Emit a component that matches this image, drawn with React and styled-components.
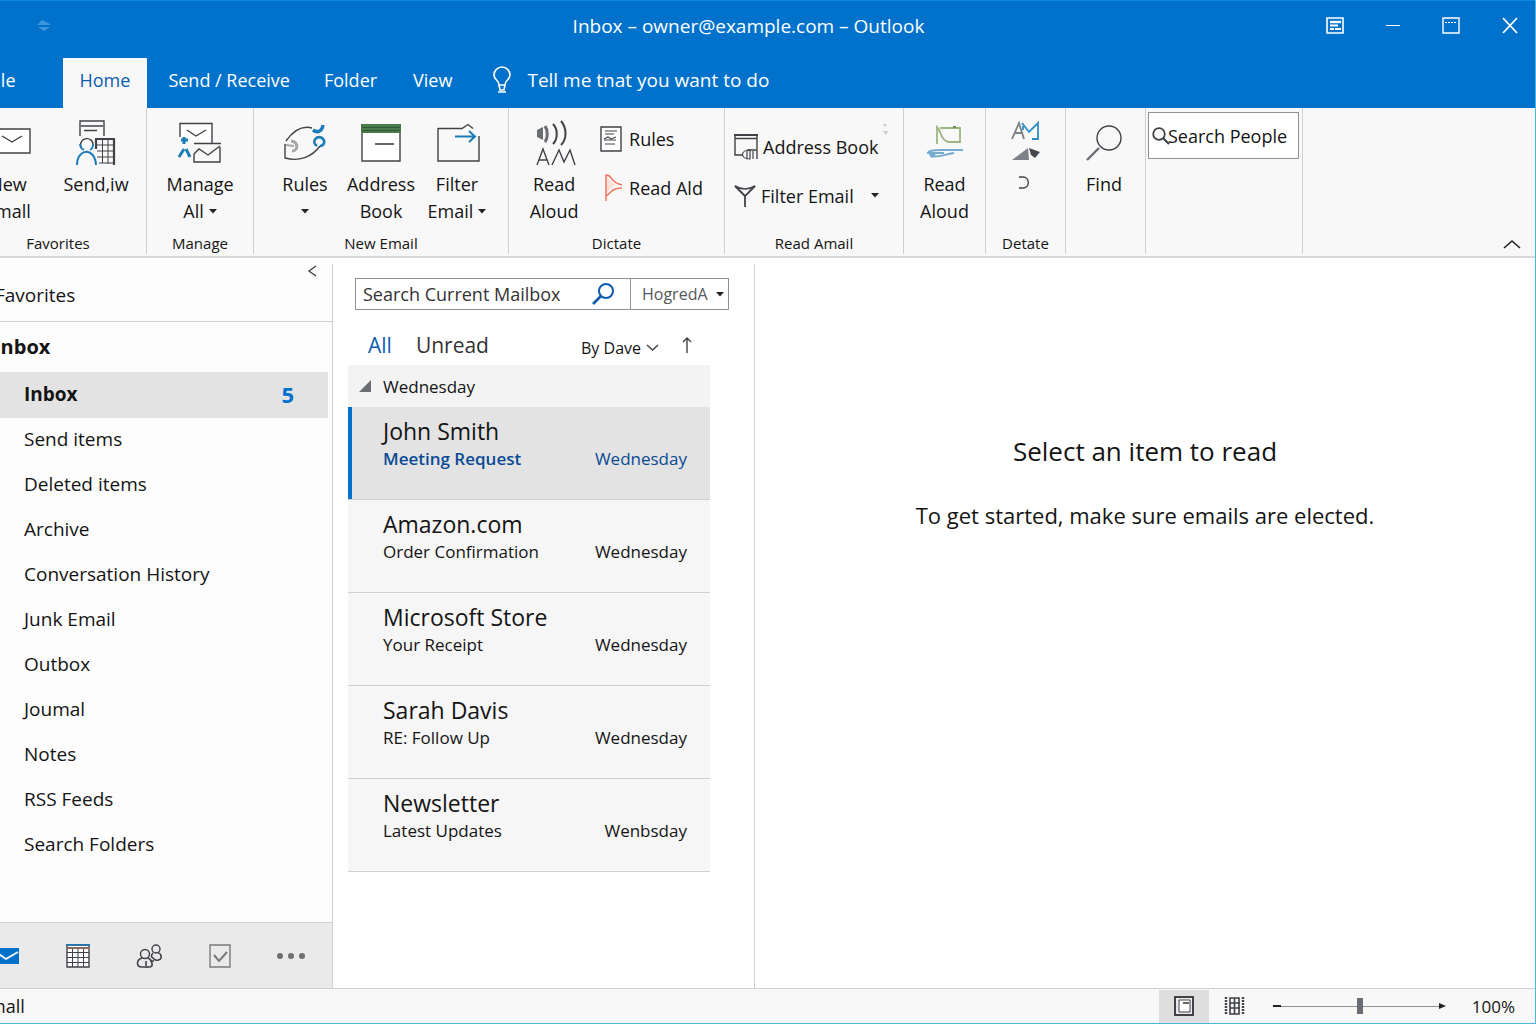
import React, { useState } from "react";
import styled, { createGlobalStyle } from "styled-components";

const primaryColor = "#0072cc";
const linkColor = "#0b5cad";
const lineColor = "#d0d0d0";
const panelColor = "#f8f8f8";
const inkColor = "#3f4247";
const fontStack = `"Open Sans", "Noto Sans", sans-serif`;

const GlobalStyle = createGlobalStyle`
  * {
    box-sizing: border-box;
  }
  body {
    margin: 0;
    overflow: hidden;
    background: #fff;
    color: #141414;
    font-family: ${fontStack};
    font-size: 18px;
  }
  button, input, select {
    font-family: inherit;
    color: inherit;
    margin: 0;
  }
  button {
    background: none;
    border: none;
    padding: 0;
    cursor: pointer;
  }
  svg {
    display: block;
    flex: none;
    overflow: visible;
  }
`;

// the window hangs a little over the left edge of the screen
const Window = styled.div`
  display: flex;
  flex-direction: column;
  min-height: 100vh;
  margin-left: -30px;
  border-right: 1px solid #4db4dc;
  border-bottom: 1px solid #4db4dc;
`;

const TitleBar = styled.header`
  display: grid;
  grid-template-columns: 1fr auto 1fr;
  align-items: center;
  height: 58px;
  padding: 0 17px 8px 9px;
  background: ${primaryColor};
  border-top: 1px solid #0a8be0;
  color: #fff;
`;

const QuickAccess = styled.div`
  padding-left: 58px;
`;

const Title = styled.h1`
  margin: 0;
  font-size: 19px;
  font-weight: 400;
  line-height: 24px;
`;

const WindowButtons = styled.div`
  display: flex;
  justify-content: flex-end;
  gap: 42px;
`;

const TabBar = styled.nav`
  display: flex;
  height: 50px;
  background: ${primaryColor};
  color: #fff;
`;

const Tab = styled.button`
  padding: 0 17px 6px;
  margin-right: ${(props) => props.$gap || 0}px;
  font-size: 18px;
  line-height: 44px;
  background: ${(props) => (props.$active ? panelColor : "transparent")};
  color: ${(props) => (props.$active ? linkColor : "#fff")};
`;

const TellMe = styled.button`
  display: flex;
  align-items: center;
  gap: 16px;
  margin-left: 24px;
  padding-bottom: 6px;
  font-size: 19px;
  color: #fff;
`;

const Ribbon = styled.section`
  display: flex;
  height: 150px;
  background: ${panelColor};
  border-bottom: 2px solid #d9d9d9;
`;

const Group = styled.div`
  display: flex;
  flex-direction: column;
  flex: none;
  width: ${(props) => props.$width}px;
  margin-bottom: 2px;
  border-right: 1px solid ${lineColor};
`;

const GroupBody = styled.div`
  display: flex;
  flex: 1;
  justify-content: center;
  gap: ${(props) => props.$gap || 0}px;
  padding-right: ${(props) => props.$inset || 0}px;
`;

const GroupLabel = styled.div`
  height: 22px;
  font-size: 15px;
  line-height: 22px;
  text-align: center;
`;

const BigButton = styled.button`
  display: flex;
  flex-direction: column;
  align-items: center;
  width: 76px;
  padding-top: 7px;
  font-size: 18px;
  line-height: 27px;
  white-space: nowrap;
`;

const IconBox = styled.span`
  display: flex;
  align-items: center;
  justify-content: center;
  height: 56px;
`;

const Line = styled.span`
  display: flex;
  align-items: center;
  gap: 5px;
  height: 27px;
`;

const SmallStack = styled.div`
  display: flex;
  flex-direction: column;
  flex: ${(props) => (props.$grow ? 1 : "none")};
  padding: ${(props) => props.$pad};
`;

const SmallButton = styled.button`
  display: flex;
  align-items: center;
  gap: ${(props) => props.$gap}px;
  height: 49px;
  font-size: 18px;
  white-space: nowrap;
`;

const PeopleSearch = styled.label`
  display: flex;
  align-items: center;
  height: 47px;
  margin: 4px 3px 0 2px;
  padding-left: 4px;
  background: #fff;
  border: 1px solid #8d9299;
`;

const PlainInput = styled.input`
  flex: 1;
  width: 100%;
  min-width: 0;
  padding: 0;
  border: none;
  outline: none;
  background: transparent;
  font-size: 18px;
  &::placeholder {
    color: ${(props) => props.$tint || "#141414"};
    opacity: 1;
  }
`;

const CollapseRibbon = styled.button`
  align-self: flex-end;
  margin: 0 15px 8px auto;
`;

const Main = styled.main`
  display: flex;
  flex: 1;
  padding-top: 6px;
`;

const Sidebar = styled.aside`
  display: flex;
  flex-direction: column;
  width: 363px;
  flex: none;
  border-right: 1px solid ${lineColor};
  background: #fdfdfd;
`;

const FavoritesBar = styled.div`
  display: flex;
  align-items: flex-start;
  justify-content: space-between;
  height: 58px;
  padding: 0 16px 0 25px;
  border-bottom: 1px solid ${lineColor};
  font-size: 19px;
  line-height: 62px;
`;

const CollapseButton = styled.button`
  padding: 2px 0;
`;

const AccountName = styled.h2`
  margin: 0;
  padding-left: 24px;
  font-size: 20px;
  font-weight: 700;
  line-height: 50px;
`;

const FolderList = styled.ul`
  flex: 1;
  margin: 0;
  padding: 0 4px 0 0;
  list-style: none;
`;

const Folder = styled.button`
  display: flex;
  align-items: center;
  justify-content: space-between;
  width: 100%;
  height: ${(props) => (props.$active ? 46 : 45)}px;
  padding: 0 34px 3px 54px;
  background: ${(props) => (props.$active ? "#e3e3e3" : "transparent")};
  font-size: 19px;
  font-weight: ${(props) => (props.$active ? 700 : 400)};
`;

const Count = styled.span`
  color: ${primaryColor};
  font-size: 22px;
`;

const ModuleBar = styled.nav`
  display: flex;
  align-items: center;
  justify-content: space-between;
  height: 66px;
  padding: 0 27px 0 25px;
  background: #eaeaea;
  border-top: 1px solid ${lineColor};
`;

const MessagePane = styled.section`
  width: 422px;
  flex: none;
  padding: 14px 44px 0 15px;
  border-right: 1px solid ${lineColor};
`;

const MailSearch = styled.div`
  display: flex;
  height: 32px;
  margin: 0 -19px 0 7px;
  border: 1px solid #8d9299;
`;

const SearchField = styled.label`
  display: flex;
  align-items: center;
  flex: 1;
  min-width: 0;
  padding: 0 16px 0 7px;
`;

const ScopeBox = styled.div`
  display: flex;
  align-items: center;
  width: 98px;
  padding-right: 4px;
  border-left: 1px solid #8d9299;
`;

const ScopeSelect = styled.select`
  flex: 1;
  min-width: 0;
  padding: 0 0 0 11px;
  appearance: none;
  border: none;
  outline: none;
  background: transparent;
  color: #55585c;
  font-size: 16px;
`;

const FilterRow = styled.div`
  display: flex;
  align-items: center;
  height: 55px;
  padding: 14px 18px 0 20px;
`;

const FilterTab = styled.button`
  margin-right: 24px;
  font-size: 21px;
  line-height: 30px;
  color: ${(props) => (props.$active ? linkColor : "#333")};
`;

const SortButton = styled.button`
  display: flex;
  align-items: center;
  gap: 6px;
  margin-left: auto;
  margin-right: 24px;
  padding-top: 6px;
  font-size: 16px;
`;

const DayHeader = styled.button`
  display: flex;
  align-items: center;
  gap: 12px;
  width: 100%;
  height: 42px;
  padding-left: 11px;
  background: #f3f3f3;
  font-size: 17px;
  font-weight: 500;
`;

const MessageList = styled.ul`
  margin: 0;
  padding: 0;
  list-style: none;
`;

const Message = styled.button`
  display: grid;
  grid-template-columns: 1fr auto;
  align-content: start;
  width: 100%;
  height: 93px;
  padding: 9px 23px 0 35px;
  box-shadow: ${(props) => (props.$active ? `inset 4px 0 ${primaryColor}` : "none")};
  border-bottom: 1px solid #cfcfcf;
  background: ${(props) => (props.$active ? "#e3e3e3" : "#f6f6f6")};
  text-align: left;
`;

const Sender = styled.span`
  grid-column: 1 / -1;
  font-size: 23px;
  line-height: 30px;
`;

const Subject = styled.span`
  font-size: 17px;
  line-height: 26px;
  font-weight: ${(props) => (props.$active ? 600 : 400)};
  color: ${(props) => (props.$active ? "#0a4a94" : "inherit")};
`;

const MessageDate = styled.span`
  font-size: 17px;
  line-height: 26px;
  color: ${(props) => (props.$active ? "#0a4a94" : "inherit")};
`;

const ReadingPane = styled.section`
  flex: 1;
  padding-top: 169px;
  text-align: center;
`;

const EmptyTitle = styled.h2`
  margin: 0 0 28px;
  font-size: 26px;
  font-weight: 400;
  line-height: 36px;
`;

const EmptyText = styled.p`
  margin: 0;
  font-size: 22px;
  line-height: 36px;
`;

const StatusBar = styled.footer`
  display: flex;
  align-items: center;
  height: 35px;
  padding: 0 20px 0 9px;
  background: ${panelColor};
  border-top: 1px solid ${lineColor};
  font-size: 17px;
`;

const StatusText = styled.span`
  margin-right: auto;
  font-size: 18px;
`;

const ViewButton = styled.button`
  display: flex;
  align-items: center;
  justify-content: center;
  width: 50px;
  height: 33px;
  background: ${(props) => (props.$active ? "#dedede" : "transparent")};
`;

const ZoomControl = styled.label`
  display: flex;
  align-items: center;
  margin: 0 26px 0 14px;
`;

const ZoomSlider = styled.input`
  width: 158px;
  height: 16px;
  margin: 0;
  appearance: none;
  background: linear-gradient(#8d9299, #8d9299) center / 100% 1px no-repeat;
  &::-webkit-slider-thumb {
    appearance: none;
    width: 6px;
    height: 16px;
    background: #6a6e73;
  }
`;

const Svg = ({ w, h, children }) => (
  <svg
    width={w}
    height={h}
    viewBox={`0 0 ${w} ${h}`}
    fill="none"
    stroke={inkColor}
    strokeWidth="1.4"
    aria-hidden="true"
  >
    {children}
  </svg>
);

const Caret = () => (
  <Svg w={8} h={5}>
    <path d="M0 0h8L4 4.5z" fill="#222" stroke="none" />
  </Svg>
);

const EnvelopeIcon = () => (
  <Svg w={42} h={42}>
    <path d="M1 7h42v24H1z" fill="#fff" />
    <path d="M15 14l10 6 10-6" />
  </Svg>
);

const SendIcon = () => (
  <Svg w={40} h={46}>
    <path d="M4 16V1h24v15" />
    <path d="M5 6h22M8 10.500h13" strokeWidth="1.6" />
    <path d="M5 27c-3-10 13-12 12-1" />
    <path d="M4 24c0 4 2 5 4 6M17 24c0 3-1 5-3 6" stroke="#1a7db8" strokeWidth="1.8" />
    <path d="M1 45c0-17 18-18 19 0" stroke="#1a7db8" strokeWidth="2" />
    <path d="M19 19h20M20 19v10M38 19v26" strokeWidth="2.2" />
    <path d="M21 25h16M21 31h16M21 37h16M23 43h14M26.500 20v23M32 20v24" strokeWidth="1" />
  </Svg>
);

const ManageIcon = () => (
  <Svg w={44} h={42}>
    <path d="M2 15V1.500h32V21" fill="#fff" />
    <path d="M9 8l9 6 10-6" />
    <path d="M16 21.500h27M42 25v15H16v-8l5-5 9 6 12-9" />
    <path d="M6 15v7M3 18h7" stroke="#1a7db8" strokeWidth="3" />
    <path d="M1 35l5-8M8 27l4 8" stroke="#1a7db8" strokeWidth="3" />
  </Svg>
);

const RulesIcon = () => (
  <Svg w={42} h={38}>
    <path d="M2 17C9 7 17 1 28 4" />
    <path d="M1 20v14c14 4 27-1 35-12" />
    <path d="M2 21l8 1" stroke="#a5a7aa" strokeWidth="2" />
    <path d="M7 17c8 1 7 10 1 10" stroke="#a5a7aa" strokeWidth="3" />
    <path d="M29 6c4 3 9 2 10-5" stroke="#1a7db8" strokeWidth="3.500" />
    <path d="M33 22c-6-4-1-11 5-8 4 3 2 8-2 8" stroke="#1a7db8" strokeWidth="2.600" />
  </Svg>
);

const BookIcon = () => (
  <Svg w={40} h={38}>
    <path d="M1 1h38v36H1z" fill="#fff" />
    <path d="M0 0h40v9H0z" fill="#4b7a4b" stroke="none" />
    <path d="M1 3.500h38M1 6.500h38" stroke="#2f5a35" strokeWidth="1" />
    <path d="M14 20h19" strokeWidth="1.600" />
  </Svg>
);

const FilterFolderIcon = () => (
  <Svg w={40} h={38}>
    <path d="M1 4.500h24l6-4 5 4M42 12v25H1V4" />
    <path d="M18 12.500h19M32 7l6 5.500-6 5.500" stroke="#1a7db8" strokeWidth="2" />
  </Svg>
);

const AloudIcon = () => (
  <Svg w={36} h={46}>
    <path d="M1 10l6-3v13l-6-3z" fill="#6a6e73" stroke="none" />
    <path d="M9 6c3 4 3 12 0 16" strokeWidth="3" stroke="#6a6e73" />
    <path d="M17 4c5 5 5 15 0 20M25 1c6 7 6 18 0 24" strokeWidth="2" />
    <path d="M1 45l6-16 6 16M3 40h8M16 45l7-15 5 12 6-12 5 15" />
  </Svg>
);

const NoteIcon = () => (
  <Svg w={22} h={26}>
    <path d="M1 1h20v24H1z" fill="#fff" />
    <path d="M5 5h12M5 8h9M4 13l4-2 3 2 5-2M4 14h12M5 18h10" strokeWidth="1.100" />
  </Svg>
);

const FlagIcon = () => (
  <Svg w={22} h={28}>
    <path d="M6 3l9 8-9 8z" fill="#fce0da" stroke="none" />
    <path
      d="M6 27V1c3 0 4 1 5 3 3 4 6 6 11 7M6 22c5-3 6-8 16-8"
      stroke="#ef7662"
      strokeWidth="1.500"
    />
  </Svg>
);

const CardIcon = () => (
  <Svg w={24} h={26}>
    <path d="M0 1h24" strokeWidth="2" />
    <path d="M1 1v20h8M1 4.500h22M23 1v14M13 16h10v9" />
    <path d="M16 16v9c-10 0-10-9 0-9zM13 17v8M19 17v8" strokeWidth="1.200" />
  </Svg>
);

const FunnelIcon = () => (
  <Svg w={22} h={22}>
    <path d="M1 1l10 10M21 1L11 11v11" strokeWidth="1.800" />
    <path d="M1 1c6 4 14 4 20 0" strokeWidth="1.600" />
  </Svg>
);

const PaintIcon = () => (
  <Svg w={38} h={34}>
    <path d="M11 18V1c4 4 4 14 12 15h11V2H14" stroke="#9db581" strokeWidth="1.800" />
    <path d="M27 1h3" stroke="#6f8f55" strokeWidth="2" />
    <path d="M37 24H14c-6 0-12 1-12 3h16M4 30c8 2 12-1 24-3" stroke="#74abd0" strokeWidth="1.800" />
    <path d="M1 26l10 1-5 5z" fill="#74abd0" stroke="none" />
  </Svg>
);

const TranslateIcon = () => (
  <Svg w={28} h={68}>
    <path d="M0 18L7 2l5 16M3 12h8" stroke="#7c8288" strokeWidth="1.800" />
    <path d="M10 2l7 9 9-9v16h-6M11 5v4" stroke="#2f8fc4" strokeWidth="1.800" />
    <path d="M0 39l16-12 1 12z" fill="#7c8288" stroke="none" />
    <path d="M17 27l11 4-5 6-4-3z" fill="#44484d" stroke="none" />
    <path d="M7 56h4c7 0 7 11 0 11H7" />
  </Svg>
);

const FindIcon = () => (
  <Svg w={36} h={36}>
    <circle cx="23" cy="13" r="12" />
    <path d="M13 23L1 35" strokeWidth="2.400" stroke="#6a6e73" />
  </Svg>
);

const SmallSearchIcon = () => (
  <Svg w={15} h={18}>
    <circle cx="6" cy="7" r="5.800" strokeWidth="1.800" />
    <path d="M10 11l6 6" strokeWidth="2.200" />
  </Svg>
);

const PeopleIcon = () => (
  <Svg w={26} h={24}>
    <circle cx="9" cy="10" r="4.500" />
    <path d="M6 14c-6 2-6 9 0 9s11 1 10-3c0-3-2-5-4-6M10 17v5" strokeWidth="1.600" />
    <circle cx="20" cy="5" r="4" />
    <path d="M17 9c-2 2-2 4 0 5 3 4 9 2 8-2 0-2-2-3-3-3M14 17h4" strokeWidth="1.600" />
  </Svg>
);

const folders = [
  "Send items",
  "Deleted items",
  "Archive",
  "Conversation History",
  "Junk Email",
  "Outbox",
  "Joumal",
  "Notes",
  "RSS Feeds",
  "Search Folders",
];

const messages = [
  { from: "John Smith", subject: "Meeting Request", date: "Wednesday" },
  { from: "Amazon.com", subject: "Order Confirmation", date: "Wednesday" },
  { from: "Microsoft Store", subject: "Your Receipt", date: "Wednesday" },
  { from: "Sarah Davis", subject: "RE: Follow Up", date: "Wednesday" },
  { from: "Newsletter", subject: "Latest Updates", date: "Wenbsday" },
];

const Header = () => (
  <>
    <TitleBar>
      <QuickAccess>
        <Svg w={14} h={12}>
          <path d="M0 5l5-5 8 4v1zM1 7h12l-6 4z" fill="#3f95dc" stroke="none" />
        </Svg>
      </QuickAccess>
      <Title>Inbox – owner@example.com – Outlook</Title>
      <WindowButtons>
        <button aria-label="Ribbon display">
          <Svg w={18} h={17}>
            <g stroke="#fff">
              <path d="M1 1h16v15H1z" strokeWidth="1.600" />
              <path d="M4 5h11" strokeWidth="2.400" />
              <path d="M4 8.500h8M4 12h4M9 12h6" strokeWidth="2" />
            </g>
          </Svg>
        </button>
        <button aria-label="Minimize">
          <Svg w={14} h={17}>
            <path d="M0 8.500h14" stroke="#fff" strokeWidth="1" />
          </Svg>
        </button>
        <button aria-label="Maximize">
          <Svg w={18} h={17}>
            <path d="M1 1h16v15H1z" stroke="#fff" />
            <path d="M3 5.500h12" stroke="#fff" strokeWidth="1" strokeDasharray="2 1" />
          </Svg>
        </button>
        <button aria-label="Close">
          <Svg w={16} h={17}>
            <path d="M1 1l14 15M15 1L1 16" stroke="#fff" strokeWidth="1.800" />
          </Svg>
        </button>
      </WindowButtons>
    </TitleBar>
    <TabBar>
      <Tab $gap={30}>File</Tab>
      <Tab $active $gap={4}>Home</Tab>
      <Tab>Send / Receive</Tab>
      <Tab $gap={2}>Folder</Tab>
      <Tab>View</Tab>
      <TellMe>
        <Svg w={18} h={26}>
          <g stroke="#fff" strokeWidth="1.600">
            <path d="M6 18c0-5-5-5-5-10a8 8 0 0 1 16 0c0 5-5 5-5 10zM6 18l1 5h4l1-5M5 25h8" />
          </g>
        </Svg>
        Tell me tnat you want to do
      </TellMe>
    </TabBar>
  </>
);

const RibbonButton = ({ icon, lines, caret }) => (
  <BigButton>
    <IconBox>{icon}</IconBox>
    {lines.map((line, index) => (
      <Line key={index}>
        {line}
        {caret && index === lines.length - 1 && <Caret />}
      </Line>
    ))}
  </BigButton>
);

const RibbonBar = () => (
  <Ribbon>
    <Group $width={177}>
      <GroupBody $gap={12} $inset={12}>
        <RibbonButton icon={<EnvelopeIcon />} lines={["New", "Emall"]} />
        <RibbonButton icon={<SendIcon />} lines={["Send,iw"]} />
      </GroupBody>
      <GroupLabel>Favorites</GroupLabel>
    </Group>
    <Group $width={107}>
      <GroupBody>
        <RibbonButton icon={<ManageIcon />} lines={["Manage", "All"]} caret />
      </GroupBody>
      <GroupLabel>Manage</GroupLabel>
    </Group>
    <Group $width={255}>
      <GroupBody>
        <RibbonButton icon={<RulesIcon />} lines={["Rules", ""]} caret />
        <RibbonButton icon={<BookIcon />} lines={["Address", "Book"]} />
        <RibbonButton icon={<FilterFolderIcon />} lines={["Filter", "Email"]} caret />
      </GroupBody>
      <GroupLabel>New Email</GroupLabel>
    </Group>
    <Group $width={216}>
      <GroupBody $gap={8} $inset={14}>
        <RibbonButton icon={<AloudIcon />} lines={["Read", "Aloud"]} />
        <SmallStack $pad="6px 0 0">
          <SmallButton $gap={7}>
            <NoteIcon />
            Rules
          </SmallButton>
          <SmallButton $gap={7}>
            <FlagIcon />
            Read Ald
          </SmallButton>
        </SmallStack>
      </GroupBody>
      <GroupLabel>Dictate</GroupLabel>
    </Group>
    <Group $width={179}>
      <GroupBody>
        <SmallStack $grow $pad="14px 0 0 9px">
          <SmallButton $gap={5}>
            <CardIcon />
            Address Book
          </SmallButton>
          <SmallButton $gap={5}>
            <FunnelIcon />
            Filter Email
            <Svg w={20} h={5}>
              <path d="M12 0h8l-4 4.500z" fill="#222" stroke="none" />
            </Svg>
          </SmallButton>
        </SmallStack>
        <SmallStack $pad="15px 15px 0 0">
          <Svg w={5} h={12}>
            <path d="M0 1h4L2 4zM0 8h5l-2 4z" fill="#c9c9c9" stroke="none" />
          </Svg>
        </SmallStack>
      </GroupBody>
      <GroupLabel>Read Amail</GroupLabel>
    </Group>
    <Group $width={82}>
      <GroupBody>
        <RibbonButton icon={<PaintIcon />} lines={["Read", "Aloud"]} />
      </GroupBody>
    </Group>
    <Group $width={80}>
      <GroupBody>
        <SmallStack $pad="13px 0 0">
          <button aria-label="Translate">
            <TranslateIcon />
          </button>
        </SmallStack>
      </GroupBody>
      <GroupLabel>Detate</GroupLabel>
    </Group>
    <Group $width={80}>
      <RibbonButton icon={<FindIcon />} lines={["Find"]} />
    </Group>
    <Group $width={157}>
      <PeopleSearch>
        <SmallSearchIcon />
        <PlainInput type="text" placeholder="Search People" aria-label="Search People" />
      </PeopleSearch>
    </Group>
    <CollapseRibbon aria-label="Collapse ribbon">
      <Svg w={16} h={8}>
        <path d="M0 8l8-7 8 7" stroke="#222" strokeWidth="1.600" />
      </Svg>
    </CollapseRibbon>
  </Ribbon>
);

const FolderPane = () => (
  <Sidebar>
    <FavoritesBar>
      Favorites
      <CollapseButton aria-label="Collapse folder pane">
        <Svg w={8} h={10}>
          <path d="M8 0L1 5l7 5" />
        </Svg>
      </CollapseButton>
    </FavoritesBar>
    <AccountName>Inbox</AccountName>
    <FolderList>
      <li>
        <Folder $active>
          Inbox
          <Count>5</Count>
        </Folder>
      </li>
      {folders.map((name) => (
        <li key={name}>
          <Folder>{name}</Folder>
        </li>
      ))}
    </FolderList>
    <ModuleBar>
      <button aria-label="Mail">
        <Svg w={24} h={16}>
          <path d="M0 0h24v16H0z" fill={primaryColor} stroke="none" />
          <path d="M1 4l10 7 12-7" stroke="#fff" strokeWidth="1.800" />
        </Svg>
      </button>
      <button aria-label="Calendar">
        <Svg w={24} h={24}>
          <path d="M1 1h22v22H1z" fill="#fff" />
          <path d="M0 1h24" stroke="#2a74a8" strokeWidth="2" />
          <path d="M1 4h22" stroke="#8a6a5c" strokeWidth="2" />
          <path d="M1 8.500h22M1 13.500h22M1 18.500h22M6.500 5v18M12 5v18M17.500 5v18" strokeWidth="1" />
        </Svg>
      </button>
      <button aria-label="People">
        <PeopleIcon />
      </button>
      <button aria-label="Tasks">
        <Svg w={22} h={24}>
          <path d="M1 1h20v22H1z" stroke="#77797c" />
          <path d="M5 11l5 6 8-9" stroke="#77797c" strokeWidth="2" />
        </Svg>
      </button>
      <button aria-label="More">
        <Svg w={28} h={6}>
          <g fill="#6f6f6f" stroke="none">
            <circle cx="3" cy="3" r="3" />
            <circle cx="14" cy="3" r="3" />
            <circle cx="25" cy="3" r="3" />
          </g>
        </Svg>
      </button>
    </ModuleBar>
  </Sidebar>
);

const MessagesColumn = () => {
  const [selected, setSelected] = useState(0);

  return (
    <MessagePane>
      <MailSearch>
        <SearchField>
          <PlainInput
            type="text"
            placeholder="Search Current Mailbox"
            aria-label="Search Current Mailbox"
            $tint="#333"
          />
          <Svg w={22} h={22}>
            <g stroke={linkColor} strokeWidth="2">
              <circle cx="14" cy="8" r="7" />
              <path d="M9 13l-8 8" strokeWidth="2.600" />
            </g>
          </Svg>
        </SearchField>
        <ScopeBox>
          <ScopeSelect aria-label="Search scope">
            <option>HogredA</option>
          </ScopeSelect>
          <Caret />
        </ScopeBox>
      </MailSearch>
      <FilterRow>
        <FilterTab $active>All</FilterTab>
        <FilterTab>Unread</FilterTab>
        <SortButton>
          By Dave
          <Svg w={11} h={6}>
            <path d="M0 0l5.500 5L11 0" />
          </Svg>
        </SortButton>
        <button aria-label="Sort direction">
          <Svg w={10} h={16}>
            <path d="M5 16V1M1 5l4-4 4 4" />
          </Svg>
        </button>
      </FilterRow>
      <DayHeader>
        <Svg w={12} h={12}>
          <path d="M12 0v12H0z" fill="#6a6e73" stroke="none" />
        </Svg>
        Wednesday
      </DayHeader>
      <MessageList>
        {messages.map((message, index) => (
          <li key={message.from}>
            <Message $active={index === selected} onClick={() => setSelected(index)}>
              <Sender>{message.from}</Sender>
              <Subject $active={index === selected}>{message.subject}</Subject>
              <MessageDate $active={index === selected}>{message.date}</MessageDate>
            </Message>
          </li>
        ))}
      </MessageList>
    </MessagePane>
  );
};

const Status = () => (
  <StatusBar>
    <StatusText>Emall</StatusText>
    <ViewButton $active aria-label="Normal view">
      <Svg w={20} h={20}>
        <path d="M1 1h18v18H1z" fill="#e9e9e9" strokeWidth="2" />
        <path d="M5 4h11v12H5z" fill="#fff" strokeWidth="1" />
        <path d="M9 7h6" strokeWidth="1.600" />
      </Svg>
    </ViewButton>
    <ViewButton aria-label="Reading view">
      <Svg w={20} h={18}>
        <path d="M2 0v18M19 0v18" strokeWidth="2.400" strokeDasharray="2 1" />
        <path d="M6 1h9v16H6zM6 6h10M6 11h10M10.500 1v16" strokeWidth="1.600" />
      </Svg>
    </ViewButton>
    <ZoomControl>
      <Svg w={8} h={6}>
        <path d="M0 3h8" stroke="#222" strokeWidth="2" />
      </Svg>
      <ZoomSlider type="range" min="0" max="200" defaultValue="100" aria-label="Zoom" />
      <Svg w={7} h={6}>
        <path d="M0 0l7 3-7 3z" fill="#222" stroke="none" />
      </Svg>
    </ZoomControl>
    100%
  </StatusBar>
);

const App = () => (
  <>
    <GlobalStyle />
    <Window>
      <Header />
      <RibbonBar />
      <Main>
        <FolderPane />
        <MessagesColumn />
        <ReadingPane>
          <EmptyTitle>Select an item to read</EmptyTitle>
          <EmptyText>To get started, make sure emails are elected.</EmptyText>
        </ReadingPane>
      </Main>
      <Status />
    </Window>
  </>
);

export default App;
